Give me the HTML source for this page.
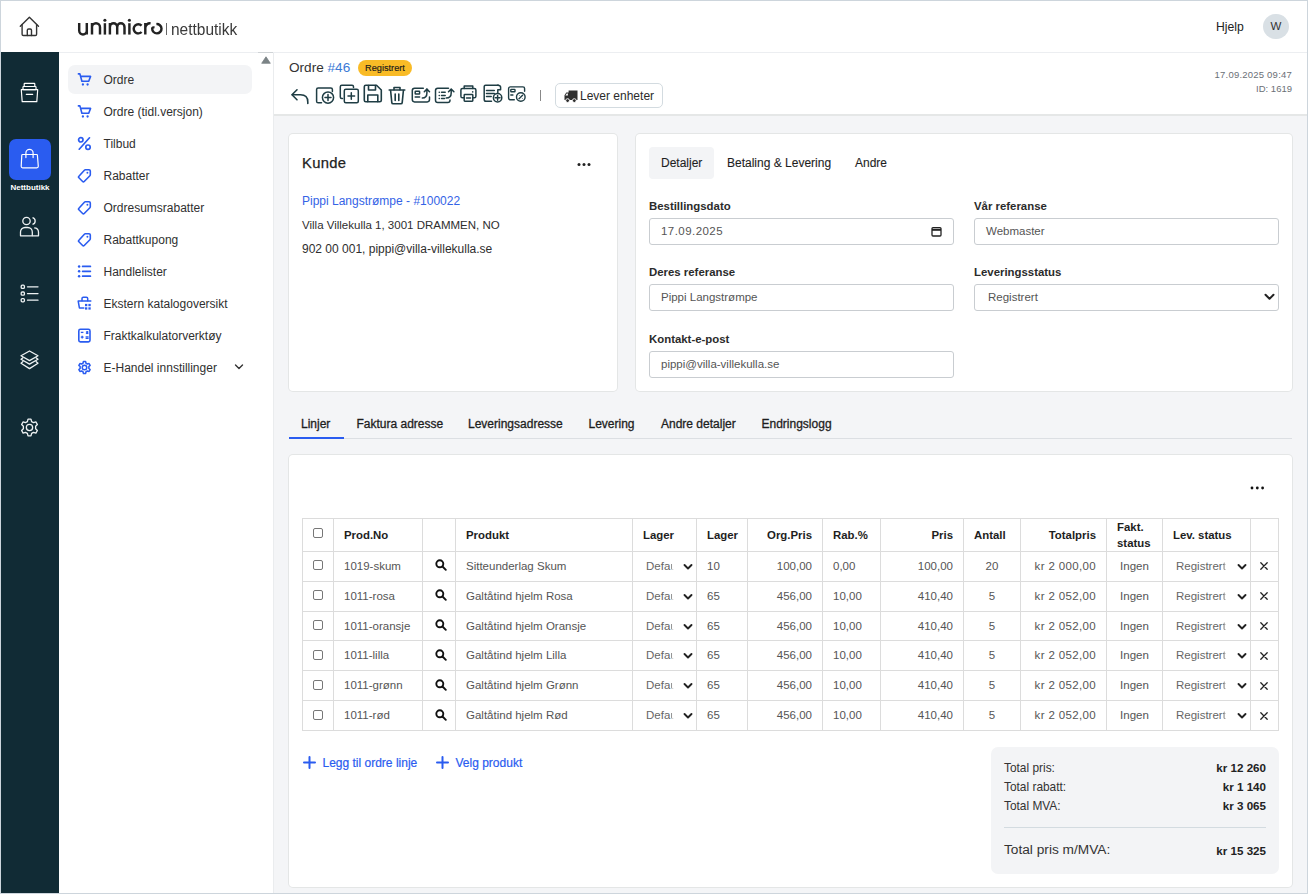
<!DOCTYPE html>
<html><head><meta charset="utf-8">
<style>
*{box-sizing:border-box;margin:0;padding:0}
html,body{width:1308px;height:894px;overflow:hidden;background:#fff}
body{font-family:"Liberation Sans",sans-serif;color:#2b2b2b;font-size:12px;position:relative}
.a{position:absolute}
.frame{position:absolute;left:0;top:0;width:1308px;height:894px;border:1px solid #cdd5dc;pointer-events:none;z-index:50}
.hdr{left:0;top:0;width:1308px;height:53px;background:#fff;border-bottom:1px solid #eceef1}
.side{left:1px;top:52px;width:58px;height:842px;background:#112b35}
.menu{left:59px;top:53px;width:215px;height:841px;background:#fff;border-right:1px solid #eaecee}
.content{left:274px;top:53px;width:1034px;height:841px;background:#f4f5f7}
.tb{left:274px;top:53px;width:1034px;height:63px;background:#fff;border-bottom:2px solid #e5e7e7}
.mi{position:absolute;left:68px;width:184px;height:29px;border-radius:7px}
.mi .t{position:absolute;left:35.5px;top:7.5px;font-size:12px;color:#303030;white-space:nowrap;line-height:14px}
.mi svg{position:absolute;left:9px;top:7px}
.card{background:#fff;border-radius:4px;box-shadow:0 0 0 1px #e4e6e6}
.lbl{position:absolute;font-weight:700;font-size:11.4px;color:#2b2b2b;white-space:nowrap}
.inp{position:absolute;height:27px;border:1px solid #c9cdd1;border-radius:3px;background:#fff;font-size:11.5px;color:#555;padding-left:11px;line-height:25px;white-space:nowrap}
.tab{position:absolute;font-size:12px;color:#1e1e1e;white-space:nowrap;line-height:14px;-webkit-text-stroke:0.3px #1e1e1e}
table.lines{position:absolute;left:302px;top:518px;border-collapse:collapse;table-layout:fixed;width:977px}
table.lines td,table.lines th{border:1px solid #dcdcdc;padding:0 10px;font-size:11.5px;white-space:nowrap;overflow:hidden}
table.lines th{font-weight:700;color:#1e1e1e;text-align:left;height:33px;font-size:11.4px;line-height:16px}
table.lines td{height:29.83px;color:#555;padding-bottom:1px}
.cbr{position:relative;top:-2px}
.cbh{position:relative;top:-3px}
.num{letter-spacing:0.25px}
.r{text-align:right!important}
.c{text-align:center!important}
.cb{display:inline-block;width:10px;height:10px;border:1px solid #777;border-radius:2px;background:#fff;vertical-align:middle}
.sel{position:relative;display:block}
.chev{position:absolute;right:-7px;top:50%;margin-top:-3px}
.sel{padding-left:3px;color:#666}
.fd{display:inline-block;overflow:hidden;vertical-align:bottom;-webkit-mask-image:linear-gradient(90deg,#000 10%,transparent 100%)}
.tot{position:absolute;font-size:11.9px;color:#333;white-space:nowrap}
.totb{position:absolute;font-size:11.6px;font-weight:700;color:#222;white-space:nowrap;text-align:right}
</style></head><body>
<div class="frame"></div>

<!-- header -->
<div class="a hdr"></div>
<svg class="a" style="left:19px;top:16px" width="22" height="22" viewBox="0 0 22 22" fill="none" stroke="#333" stroke-width="1.4" stroke-linejoin="round" stroke-linecap="round">
<path d="M1.3 10.2 L10.4 1.3 L19.5 10.2"/><path d="M3.1 8.5 V18.2 Q3.1 19.5 4.4 19.5 H16.3 Q17.6 19.5 17.6 18.2 V8.5"/><path d="M8.3 19.5 V14.3 Q8.3 13 9.6 13 H11.2 Q12.5 13 12.5 14.3 V19.5"/></svg>
<svg class="a" style="left:0;top:0" width="170" height="45" viewBox="0 0 170 45" fill="none" stroke="#232323" stroke-width="2.45">
<path d="M79.2 23 V30.6 A3.8 3.8 0 0 0 86.8 30.6 V23 M86.8 29 V34.6"/>
<path d="M92 34.6 V23 M92 27.2 A4 4 0 0 1 100 27.2 V34.6"/>
<path d="M104.9 23.2 V34.6"/><circle cx="104.9" cy="20.2" r="1.55" fill="#232323" stroke="none"/>
<path d="M109.9 34.6 V23 M109.9 26.9 A3.65 3.65 0 0 1 117.2 26.9 V34.6 M117.2 26.9 A3.65 3.65 0 0 1 124.5 26.9 V34.6"/>
<path d="M129.4 23.2 V34.6"/><circle cx="129.4" cy="20.2" r="1.55" fill="#232323" stroke="none"/>
<path d="M141.6 25.6 A4.6 4.6 0 1 0 141.6 32"/>
<path d="M145.3 34.6 V23 M145.3 28 A4.6 4.6 0 0 1 150.6 23.4"/>
<path d="M156.4 24.1 A4.65 4.65 0 1 1 152.2 28.6 Q152.3 26.9 154.5 27.6"/>
</svg>
<div class="a" style="left:166px;top:23px;width:1px;height:12px;background:#666"></div>
<div class="a" style="left:170.5px;top:19px;font-size:17.2px;color:#3a3a3a;line-height:20px;transform:scaleX(0.9);transform-origin:0 0;white-space:nowrap">nettbutikk</div>
<div class="a" style="left:1216px;top:20px;font-size:12.2px;color:#222;line-height:14px">Hjelp</div>
<div class="a" style="left:1263px;top:14px;width:26px;height:25px;border-radius:13px;background:#d9e0e5;color:#333;font-size:11.5px;text-align:center;line-height:25px">W</div>

<!-- dark sidebar -->
<div class="a side"></div>

<svg class="a" style="left:20px;top:82px" width="19" height="21" viewBox="0 0 19 21" fill="none" stroke="#fff" stroke-width="1.2" stroke-linejoin="round">
<rect x="4.2" y="1.3" width="10.6" height="3.2" rx="0.6"/><rect x="3" y="4.5" width="13" height="3.2" rx="0.6"/>
<path d="M1.3 7.7 H17.7 L16.8 19.7 H2.2 Z"/><path d="M6.3 12.3 H12.7" stroke-linecap="round"/>
</svg>
<div class="a" style="left:9px;top:139px;width:42px;height:41px;border-radius:7px;background:#2a5cf0"></div>
<svg class="a" style="left:20px;top:148px" width="20" height="21" viewBox="0 0 20 21" fill="none" stroke="#fff" stroke-width="1.2" stroke-linejoin="round" stroke-linecap="round">
<path d="M2.6 6.5 H16.6 Q17.3 6.5 17.4 7.2 L18.3 18.3 Q18.3 19.8 16.8 19.8 H2.6 Q1.2 19.8 1.2 18.3 L1.8 7.2 Q1.9 6.5 2.6 6.5 Z"/>
<path d="M5.9 9.6 V5 A3.6 3.6 0 0 1 13.1 5 V9.6"/>
</svg>
<div class="a" style="left:0;top:182px;width:60px;text-align:center;font-size:8px;font-weight:700;color:#fff;line-height:11px">Nettbutikk</div>
<svg class="a" style="left:19px;top:216px" width="21" height="21" viewBox="0 0 21 21" fill="none" stroke="#eef2f3" stroke-width="1.3" stroke-linejoin="round">
<circle cx="7.5" cy="5" r="3.7"/><path d="M13.5 1.6 A3.5 3.5 0 0 1 13.5 8.4"/>
<path d="M1.5 19.8 V16 A4.5 4.5 0 0 1 6 11.5 H8.8 A4.5 4.5 0 0 1 13.3 16 V19.8 Z"/><path d="M15.2 11.8 A4.5 4.5 0 0 1 19.5 16 V19.8 H13.3"/>
</svg>
<svg class="a" style="left:19px;top:283px" width="21" height="21" viewBox="0 0 21 21" fill="none" stroke="#eef2f3" stroke-width="1.3" stroke-linejoin="round" stroke-linecap="round">
<rect x="2.2" y="2.2" width="3.2" height="3.2" rx="1"/><rect x="2.2" y="9" width="3.2" height="3.2" rx="1"/><rect x="2.2" y="15.6" width="3.2" height="3.2" rx="1"/>
<path d="M8.5 3.8 H19"/><path d="M8.5 10.6 H19"/><path d="M8.5 17.2 H19"/>
</svg>
<svg class="a" style="left:19px;top:350px" width="21" height="21" viewBox="0 0 21 21" fill="none" stroke="#eef2f3" stroke-width="1.3" stroke-linejoin="round">
<path d="M10.5 1 L19 5.8 L10.5 10.6 L2 5.8 Z"/><path d="M4.3 7.6 L2 9.3 L10.5 14.1 L19 9.3 L16.7 7.6"/><path d="M4.3 11.3 L2 13.2 L10.5 18.6 L19 13.2 L16.7 11.3"/>
</svg>
<svg class="a" style="left:19px;top:417px" width="21" height="21" viewBox="0 0 24 24" fill="none" stroke="#eef2f3" stroke-width="1.5" stroke-linejoin="round">
<path d="M10.3 2.5 L13.7 2.5 L14.4 5.2 L16.6 6.4 L19.3 5.6 L21 8.6 L19 10.5 V13.5 L21 15.4 L19.3 18.4 L16.6 17.6 L14.4 18.8 L13.7 21.5 H10.3 L9.6 18.8 L7.4 17.6 L4.7 18.4 L3 15.4 L5 13.5 V10.5 L3 8.6 L4.7 5.6 L7.4 6.4 L9.6 5.2 Z"/>
<circle cx="12" cy="12" r="3.6"/>
</svg>


<!-- menu -->
<div class="a menu"></div>
<div class="a" style="left:258px;top:52px;width:15px;height:1px;background:#cfd3d6"></div>
<svg class="a" style="left:261px;top:56px" width="10" height="8" viewBox="0 0 10 8"><path d="M5 0.8 L9.3 7.3 H0.7 Z" fill="#7b8386" stroke="#7b8386" stroke-width="0.8" stroke-linejoin="round"/></svg>
<div class="mi" style="top:65px;background:#f3f4f6;"><svg width="15" height="15" viewBox="0 0 15 15" fill="none" stroke="#2a5cf0" stroke-width="1.6" stroke-linejoin="round" stroke-linecap="round"><path d="M1.4 1.9 H2.9 L4.9 9.2 H11.7 L13.6 4.4 H3.7"/><circle cx="5.9" cy="12.5" r="1.15" fill="#2a5cf0" stroke="none"/><circle cx="10.6" cy="12.5" r="1.15" fill="#2a5cf0" stroke="none"/></svg><div class="t">Ordre</div></div>
<div class="mi" style="top:97px;"><svg width="15" height="15" viewBox="0 0 15 15" fill="none" stroke="#2a5cf0" stroke-width="1.6" stroke-linejoin="round" stroke-linecap="round"><path d="M1.4 1.9 H2.9 L4.9 9.2 H11.7 L13.6 4.4 H3.7"/><circle cx="5.9" cy="12.5" r="1.15" fill="#2a5cf0" stroke="none"/><circle cx="10.6" cy="12.5" r="1.15" fill="#2a5cf0" stroke="none"/></svg><div class="t">Ordre (tidl.versjon)</div></div>
<div class="mi" style="top:129px;"><svg width="15" height="15" viewBox="0 0 15 15" fill="none" stroke="#2a5cf0" stroke-width="1.7" stroke-linecap="round"><path d="M12.5 1.8 L2.2 13.2"/><circle cx="3.8" cy="3.8" r="2.2"/><circle cx="11" cy="11.2" r="2.2"/></svg><div class="t">Tilbud</div></div>
<div class="mi" style="top:161px;"><svg width="15" height="15" viewBox="0 0 15 15" fill="none" stroke="#2a5cf0" stroke-width="1.6" stroke-linejoin="round"><path d="M8.3 1.8 H12 Q13.3 1.8 13.3 3.1 V6.8 Q13.3 7.4 12.9 7.8 L7.2 13.5 Q6.4 14.3 5.6 13.5 L1.9 9.8 Q1.1 9 1.9 8.2 L7.4 2.2 Q7.8 1.8 8.3 1.8 Z"/><circle cx="10.4" cy="4.7" r="0.95" fill="#2a5cf0" stroke="none"/></svg><div class="t">Rabatter</div></div>
<div class="mi" style="top:193px;"><svg width="15" height="15" viewBox="0 0 15 15" fill="none" stroke="#2a5cf0" stroke-width="1.6" stroke-linejoin="round"><path d="M8.3 1.8 H12 Q13.3 1.8 13.3 3.1 V6.8 Q13.3 7.4 12.9 7.8 L7.2 13.5 Q6.4 14.3 5.6 13.5 L1.9 9.8 Q1.1 9 1.9 8.2 L7.4 2.2 Q7.8 1.8 8.3 1.8 Z"/><circle cx="10.4" cy="4.7" r="0.95" fill="#2a5cf0" stroke="none"/></svg><div class="t">Ordresumsrabatter</div></div>
<div class="mi" style="top:225px;"><svg width="15" height="15" viewBox="0 0 15 15" fill="none" stroke="#2a5cf0" stroke-width="1.6" stroke-linejoin="round"><path d="M8.3 1.8 H12 Q13.3 1.8 13.3 3.1 V6.8 Q13.3 7.4 12.9 7.8 L7.2 13.5 Q6.4 14.3 5.6 13.5 L1.9 9.8 Q1.1 9 1.9 8.2 L7.4 2.2 Q7.8 1.8 8.3 1.8 Z"/><circle cx="10.4" cy="4.7" r="0.95" fill="#2a5cf0" stroke="none"/></svg><div class="t">Rabattkupong</div></div>
<div class="mi" style="top:257px;"><svg width="15" height="15" viewBox="0 0 15 15" fill="none" stroke="#2a5cf0" stroke-width="1.7" stroke-linecap="round"><circle cx="2.1" cy="2.4" r="1.25" fill="#2a5cf0" stroke="none"/><circle cx="2.1" cy="7.3" r="1.25" fill="#2a5cf0" stroke="none"/><circle cx="2.1" cy="12.2" r="1.25" fill="#2a5cf0" stroke="none"/><path d="M5.6 2.4 H13.4 M5.6 7.3 H13.4 M5.6 12.2 H13.4"/></svg><div class="t">Handlelister</div></div>
<div class="mi" style="top:289px;"><svg width="15" height="15" viewBox="0 0 15 15" fill="none" stroke="#2a5cf0" stroke-width="1.5" stroke-linejoin="round" stroke-linecap="round"><path d="M5 4.8 V2.6 Q5 1.3 6.3 1.3 H9.4 Q10.7 1.3 10.7 2.6 V4.8"/><path d="M13.8 5 H1.2 L2.4 11.9 H6.8"/><rect x="8" y="7.9" width="2.3" height="2.3" fill="#2a5cf0" stroke="none"/><rect x="11.4" y="7.9" width="2.3" height="2.3" fill="#2a5cf0" stroke="none"/><rect x="8" y="11.3" width="2.3" height="2.3" fill="#2a5cf0" stroke="none"/><rect x="11.4" y="11.3" width="2.3" height="2.3" fill="#2a5cf0" stroke="none"/></svg><div class="t">Ekstern katalogoversikt</div></div>
<div class="mi" style="top:321px;"><svg width="15" height="15" viewBox="0 0 15 15" fill="none" stroke="#2a5cf0" stroke-width="1.6"><rect x="1.8" y="1.3" width="11.2" height="12.6" rx="1.6"/><path d="M3.8 4.4 H6.4" stroke-width="1.3"/><path d="M9.2 3.6 L11.2 5.8 M11.2 3.6 L9.2 5.8" stroke-width="1.5"/><path d="M3.8 9.1 H6.6 M5.2 7.7 V10.5" stroke-width="1.3"/><path d="M8.6 8.8 H11.6 M8.6 10.4 H11.6" stroke-width="1.2"/></svg><div class="t">Fraktkalkulatorverktøy</div></div>
<div class="mi" style="top:353px;"><svg width="15" height="15" viewBox="0 0 24 24" fill="none" stroke="#2a5cf0" stroke-width="2.4" stroke-linejoin="round"><path d="M10.3 2.5 L13.7 2.5 L14.4 5.2 L16.6 6.4 L19.3 5.6 L21 8.6 L19 10.5 V13.5 L21 15.4 L19.3 18.4 L16.6 17.6 L14.4 18.8 L13.7 21.5 H10.3 L9.6 18.8 L7.4 17.6 L4.7 18.4 L3 15.4 L5 13.5 V10.5 L3 8.6 L4.7 5.6 L7.4 6.4 L9.6 5.2 Z"/><circle cx="12" cy="12" r="3.6"/></svg><div class="t">E-Handel innstillinger</div></div>
<svg class="a" style="left:234px;top:363px" width="10" height="8" viewBox="0 0 10 8" fill="none" stroke="#333" stroke-width="1.4" stroke-linecap="round" stroke-linejoin="round"><path d="M1.5 2 L5 5.5 L8.5 2"/></svg>

<!-- content -->
<div class="a content"></div>
<div class="a tb"></div>

<div class="a" style="left:289px;top:59.5px;font-size:13.6px;color:#333;line-height:16px;white-space:nowrap">Ordre <span style="color:#3b7ad6">#46</span></div>
<div class="a" style="left:358px;top:60px;width:54px;height:16px;border-radius:8px;background:#f9bb26;font-size:9.2px;color:#1a1a1a;text-align:center;line-height:16px;-webkit-text-stroke:0.15px #1a1a1a">Registrert</div>
<svg class="a" style="left:290px;top:88px" width="20" height="17" viewBox="0 0 20 17" fill="none" stroke="#1f3d44" stroke-width="1.6" stroke-linejoin="round" stroke-linecap="round"><path d="M7 1.8 L2 6.8 L7 11.8"/><path d="M2.3 6.8 H10.5 Q17.8 6.8 17.8 14 V15.5"/></svg><svg class="a" style="left:315px;top:86px" width="21" height="19" viewBox="0 0 21 19" fill="none" stroke="#1f3d44" stroke-width="1.5" stroke-linejoin="round" stroke-linecap="round"><path d="M6.5 16.8 H3.2 Q1.6 16.8 1.6 15.2 V3.6 Q1.6 2 3.2 2 H15.8 Q17.4 2 17.4 3.6 V5.5"/><circle cx="13" cy="11.6" r="5.6" fill="#fff"/><path d="M13 8.6 V14.6 M10 11.6 H16"/></svg><svg class="a" style="left:339px;top:84px" width="21" height="20" viewBox="0 0 21 20" fill="none" stroke="#1f3d44" stroke-width="1.5" stroke-linejoin="round" stroke-linecap="round"><path d="M3.5 14.5 H2.8 Q1.3 14.5 1.3 13 V2.8 Q1.3 1.3 2.8 1.3 H13 Q14.5 1.3 14.5 2.8 V3.5"/><rect x="5.3" y="5.3" width="14" height="13.5" rx="1.5" fill="#fff"/><path d="M12.3 8.8 V15.3 M9 12 H15.6"/></svg><svg class="a" style="left:363px;top:84px" width="20" height="19" viewBox="0 0 20 19" fill="none" stroke="#1f3d44" stroke-width="1.6" stroke-linejoin="round" stroke-linecap="round"><path d="M2.8 1.3 H13.5 L18.3 6 V16.3 Q18.3 17.8 16.8 17.8 H2.8 Q1.3 17.8 1.3 16.3 V2.8 Q1.3 1.3 2.8 1.3 Z"/><path d="M5.5 1.5 V6 H12.5 V1.5"/><path d="M4.8 17.6 V11 H14.8 V17.6"/></svg><svg class="a" style="left:388px;top:86px" width="18" height="19" viewBox="0 0 18 19" fill="none" stroke="#1f3d44" stroke-width="1.6" stroke-linejoin="round" stroke-linecap="round"><path d="M1.2 4 H16.8"/><path d="M6 3.8 V1.5 H12 V3.8"/><path d="M2.6 4.5 L3.8 16.6 Q3.9 17.8 5.1 17.8 H12.9 Q14.1 17.8 14.2 16.6 L15.4 4.5"/><path d="M7.2 8 V14.5 M10.8 8 V14.5"/></svg><svg class="a" style="left:411px;top:87px" width="21" height="17" viewBox="0 0 21 17" fill="none" stroke="#1f3d44" stroke-width="1.5" stroke-linejoin="round" stroke-linecap="round"><path d="M12.3 1.3 H3.6 Q1.3 1.3 1.3 3.6 V12.6 Q1.3 14.9 3.6 14.9 H16.2 Q18.5 14.9 18.5 12.6 V10"/><rect x="4.2" y="4.3" width="4.4" height="2.6" rx="0.5"/><path d="M4.2 10.1 H8.6"/><path d="M11.3 11 Q15.9 11 15.9 6 V2.3"/><path d="M13.3 4.7 L15.9 2.1 L18.5 4.7"/></svg><svg class="a" style="left:434px;top:87px" width="22" height="17" viewBox="0 0 22 17" fill="none" stroke="#1f3d44" stroke-width="1.5" stroke-linejoin="round" stroke-linecap="round"><path d="M14.5 1.3 H3.8 Q1.5 1.3 1.5 3.6 V13.3 Q1.5 15.6 3.8 15.6 H13.7 Q16 15.6 16 13.3 V13"/><path d="M5.2 5.3 H5.3 M5.2 8.4 H5.3 M5.2 11.4 H5.3 M7.5 5.3 H11.2 M7.5 8.4 H11.2 M7.5 11.4 H10.5"/><path d="M12.2 11 Q17.2 11 17.2 6 V2.4"/><path d="M14.5 4.8 L17.2 2.1 L19.9 4.8"/></svg><svg class="a" style="left:459px;top:84px" width="19" height="19" viewBox="0 0 19 19" fill="none" stroke="#1f3d44" stroke-width="1.5" stroke-linejoin="round" stroke-linecap="round"><path d="M5.2 4.4 V2.1 H13.8 V4.4"/><path d="M5.2 13.8 H3.5 Q1.9 13.8 1.9 12.2 V6 Q1.9 4.4 3.5 4.4 H15.3 Q16.9 4.4 16.9 6 V12.2 Q16.9 13.8 15.3 13.8 H13.8"/><rect x="5.2" y="10.6" width="8.6" height="6.6" rx="0.6"/><path d="M7.5 14 H11.5"/><circle cx="13.7" cy="7.9" r="0.8" fill="#1f3d44" stroke="none"/></svg><svg class="a" style="left:482px;top:83px" width="21" height="21" viewBox="0 0 21 21" fill="none" stroke="#1f3d44" stroke-width="1.5" stroke-linejoin="round" stroke-linecap="round"><path d="M9.5 18.2 H4 Q2.2 18.2 2.2 16.4 V3.6 Q2.2 2.2 3.6 2.2 H16.5"/><path d="M15.5 2.2 Q18.6 2.2 18.6 4.2 V6.7 H15.8 V9.5"/><path d="M4.5 7.4 H12.3 M4.5 10.5 H12.3 M4.5 13.6 H9.2"/><circle cx="15.6" cy="14.8" r="4.2" fill="#fff"/><path d="M15.6 12.4 V17.2 M13.2 14.8 H18"/></svg><svg class="a" style="left:507px;top:85px" width="21" height="19" viewBox="0 0 21 19" fill="none" stroke="#1f3d44" stroke-width="1.4" stroke-linejoin="round" stroke-linecap="round"><path d="M7.3 14.8 H3.3 Q1.6 14.8 1.6 13.1 V3.6 Q1.6 1.9 3.3 1.9 H15.9 Q17.6 1.9 17.6 3.6 V6.3"/><rect x="3.8" y="4.4" width="4.2" height="2.4" rx="0.5"/><path d="M3.8 10 H5.9"/><circle cx="13.8" cy="12" r="4.3" fill="#fff"/><path d="M12 13.8 L15.6 10.2"/><circle cx="12.3" cy="10.5" r="0.45" fill="#1f3d44" stroke="none"/><circle cx="15.3" cy="13.5" r="0.45" fill="#1f3d44" stroke="none"/></svg>
<div class="a" style="left:540px;top:90px;width:1.3px;height:11px;background:#888"></div>
<div class="a" style="left:555px;top:83px;width:108px;height:25px;border:1px solid #d3dbe0;border-radius:5px;background:#fff"></div>
<svg class="a" style="left:564px;top:90px" width="14" height="13" viewBox="0 0 14 13"><path d="M4.6 0.5 H13.5 V10 H0.5 V5.3 L2.3 2.6 H4.6 Z" fill="#2e2e2e"/><path d="M1.4 5.4 L2.7 3.6 H3.9 V5.4 Z" fill="#fff"/><circle cx="3.6" cy="10.6" r="1.9" fill="#2e2e2e" stroke="#fff" stroke-width="0.9"/><circle cx="10.3" cy="10.6" r="1.9" fill="#2e2e2e" stroke="#fff" stroke-width="0.9"/></svg>
<div class="a" style="left:580px;top:88.5px;font-size:12px;color:#2b2b2b;line-height:14px;white-space:nowrap">Lever enheter</div>
<div class="a" style="left:1190px;top:69px;width:102px;text-align:right;font-size:9.5px;letter-spacing:0.22px;color:#6b6f76;line-height:12px;white-space:nowrap">17.09.2025 09:47</div>
<div class="a" style="left:1190px;top:83px;width:102px;text-align:right;font-size:9.5px;color:#6b6f76;line-height:12px;white-space:nowrap">ID: 1619</div>


<div class="a card" style="left:289px;top:134px;width:328px;height:257px"></div>
<div class="a" style="left:302px;top:154px;font-size:14.8px;font-weight:400;color:#222;line-height:18px;letter-spacing:0.3px;-webkit-text-stroke:0.25px #222">Kunde</div>
<svg class="a" style="left:577px;top:162px" width="14" height="5" viewBox="0 0 14 5"><circle cx="2" cy="2.5" r="1.5" fill="#222"/><circle cx="7" cy="2.5" r="1.5" fill="#222"/><circle cx="12" cy="2.5" r="1.5" fill="#222"/></svg>
<div class="a" style="left:302px;top:194px;font-size:12px;color:#3463e6;line-height:14px;white-space:nowrap">Pippi Langstrømpe - #100022</div>
<div class="a" style="left:302px;top:218px;font-size:11.5px;color:#2e2e2e;line-height:14px;white-space:nowrap">Villa Villekulla 1, 3001 DRAMMEN, NO</div>
<div class="a" style="left:302px;top:242px;font-size:12px;color:#2e2e2e;line-height:14px;white-space:nowrap">902 00 001, pippi@villa-villekulla.se</div>

<div class="a card" style="left:636px;top:134px;width:656px;height:257px"></div>
<div class="a" style="left:649px;top:147px;width:65px;height:32px;border-radius:4px;background:#f3f4f6"></div>
<div class="tab" style="left:661px;top:156px;-webkit-text-stroke:0.1px #222">Detaljer</div>
<div class="tab" style="left:727px;top:156px;-webkit-text-stroke:0.1px #222">Betaling &amp; Levering</div>
<div class="tab" style="left:855px;top:156px;-webkit-text-stroke:0.1px #222">Andre</div>

<div class="lbl" style="left:649px;top:200px">Bestillingsdato</div>
<div class="inp" style="left:649px;top:218px;width:305px;letter-spacing:0.45px">17.09.2025</div>
<svg class="a" style="left:931px;top:226px" width="11" height="11" viewBox="0 0 11 11" fill="none" stroke="#222" stroke-width="1.3"><rect x="1" y="1.6" width="9" height="8.4" rx="1"/><path d="M1 3.8 H10" stroke-width="2"/></svg>
<div class="lbl" style="left:974px;top:200px">Vår referanse</div>
<div class="inp" style="left:974px;top:218px;width:305px">Webmaster</div>

<div class="lbl" style="left:649px;top:266px">Deres referanse</div>
<div class="inp" style="left:649px;top:284px;width:305px">Pippi Langstrømpe</div>
<div class="lbl" style="left:974px;top:266px">Leveringsstatus</div>
<div class="inp" style="left:974px;top:284px;width:305px;padding-left:13px">Registrert</div>
<svg class="a" style="left:1264px;top:293px" width="11" height="8" viewBox="0 0 11 8" fill="none" stroke="#222" stroke-width="2" stroke-linecap="round" stroke-linejoin="round"><path d="M1.5 1.8 L5.5 5.8 L9.5 1.8"/></svg>

<div class="lbl" style="left:649px;top:333px">Kontakt-e-post</div>
<div class="inp" style="left:649px;top:351px;width:305px">pippi@villa-villekulla.se</div>


<div class="tab" style="left:301px;top:417px">Linjer</div>
<div class="tab" style="left:356.5px;top:417px">Faktura adresse</div>
<div class="tab" style="left:468px;top:417px">Leveringsadresse</div>
<div class="tab" style="left:588.5px;top:417px">Levering</div>
<div class="tab" style="left:661px;top:417px">Andre detaljer</div>
<div class="tab" style="left:761.5px;top:417px">Endringslogg</div>
<div class="a" style="left:289px;top:438px;width:1003px;height:1px;background:#dcdfe3"></div>
<div class="a" style="left:289px;top:437px;width:55px;height:2px;background:#2a5cf0"></div>

<div class="a card" style="left:289px;top:455px;width:1003px;height:432px"></div>
<svg class="a" style="left:1250px;top:486px" width="15" height="4" viewBox="0 0 15 4"><circle cx="2" cy="2" r="1.4" fill="#111"/><circle cx="7.3" cy="2" r="1.4" fill="#111"/><circle cx="12.6" cy="2" r="1.4" fill="#111"/></svg>
<table class="lines"><colgroup><col style="width:31px"><col style="width:89px"><col style="width:33px"><col style="width:177px"><col style="width:64px"><col style="width:51px"><col style="width:75px"><col style="width:58px"><col style="width:83px"><col style="width:57px"><col style="width:86px"><col style="width:56px"><col style="width:88px"><col style="width:28px"></colgroup>
<tr><th class="c" style="padding:0"><span class="cb cbh"></span></th><th>Prod.No</th><th></th><th>Produkt</th><th>Lager</th><th>Lager</th><th class="r">Org.Pris</th><th>Rab.%</th><th class="r">Pris</th><th>Antall</th><th class="r">Totalpris</th><th>Fakt.<br>status</th><th>Lev. status</th><th></th></tr>
<tr><td class="c" style="padding:0"><span class="cb cbr"></span></td><td>1019-skum</td><td class="c" style="padding:0"><svg style="position:relative;left:2px;top:0px" width="12" height="12" viewBox="0 0 12 12" fill="none" stroke="#111" stroke-width="1.9" stroke-linecap="round"><circle cx="4.8" cy="4.8" r="3.5"/><path d="M7.5 7.5 L10.8 10.8"/></svg></td><td>Sitteunderlag Skum</td><td><span class="sel">Defa<span class="fd" style="width:4px">u</span><svg class="chev" width="10" height="8" viewBox="0 0 10 8" fill="none" stroke="#222" stroke-width="1.9" stroke-linecap="round" stroke-linejoin="round"><path d="M1.5 2 L5 5.5 L8.5 2"/></svg></span></td><td>10</td><td class="r">100,00</td><td>0,00</td><td class="r">100,00</td><td class="c">20</td><td class="r" style="letter-spacing:0.35px">kr 2 000,00</td><td class="c">Ingen</td><td><span class="sel">Registrer<span class="fd" style="width:4px">t</span><svg class="chev" width="10" height="8" viewBox="0 0 10 8" fill="none" stroke="#222" stroke-width="1.9" stroke-linecap="round" stroke-linejoin="round"><path d="M1.5 2 L5 5.5 L8.5 2"/></svg></span></td><td class="c" style="padding:0"><svg style="position:relative;left:-1px;top:1px" width="10" height="10" viewBox="0 0 10 10" fill="none" stroke="#222" stroke-width="1.3" stroke-linecap="round"><path d="M1.8 1.8 L8.2 8.2 M8.2 1.8 L1.8 8.2"/></svg></td></tr><tr><td class="c" style="padding:0"><span class="cb cbr"></span></td><td>1011-rosa</td><td class="c" style="padding:0"><svg style="position:relative;left:2px;top:0px" width="12" height="12" viewBox="0 0 12 12" fill="none" stroke="#111" stroke-width="1.9" stroke-linecap="round"><circle cx="4.8" cy="4.8" r="3.5"/><path d="M7.5 7.5 L10.8 10.8"/></svg></td><td>Galtåtind hjelm Rosa</td><td><span class="sel">Defa<span class="fd" style="width:4px">u</span><svg class="chev" width="10" height="8" viewBox="0 0 10 8" fill="none" stroke="#222" stroke-width="1.9" stroke-linecap="round" stroke-linejoin="round"><path d="M1.5 2 L5 5.5 L8.5 2"/></svg></span></td><td>65</td><td class="r">456,00</td><td>10,00</td><td class="r">410,40</td><td class="c">5</td><td class="r" style="letter-spacing:0.35px">kr 2 052,00</td><td class="c">Ingen</td><td><span class="sel">Registrer<span class="fd" style="width:4px">t</span><svg class="chev" width="10" height="8" viewBox="0 0 10 8" fill="none" stroke="#222" stroke-width="1.9" stroke-linecap="round" stroke-linejoin="round"><path d="M1.5 2 L5 5.5 L8.5 2"/></svg></span></td><td class="c" style="padding:0"><svg style="position:relative;left:-1px;top:1px" width="10" height="10" viewBox="0 0 10 10" fill="none" stroke="#222" stroke-width="1.3" stroke-linecap="round"><path d="M1.8 1.8 L8.2 8.2 M8.2 1.8 L1.8 8.2"/></svg></td></tr><tr><td class="c" style="padding:0"><span class="cb cbr"></span></td><td>1011-oransje</td><td class="c" style="padding:0"><svg style="position:relative;left:2px;top:0px" width="12" height="12" viewBox="0 0 12 12" fill="none" stroke="#111" stroke-width="1.9" stroke-linecap="round"><circle cx="4.8" cy="4.8" r="3.5"/><path d="M7.5 7.5 L10.8 10.8"/></svg></td><td>Galtåtind hjelm Oransje</td><td><span class="sel">Defa<span class="fd" style="width:4px">u</span><svg class="chev" width="10" height="8" viewBox="0 0 10 8" fill="none" stroke="#222" stroke-width="1.9" stroke-linecap="round" stroke-linejoin="round"><path d="M1.5 2 L5 5.5 L8.5 2"/></svg></span></td><td>65</td><td class="r">456,00</td><td>10,00</td><td class="r">410,40</td><td class="c">5</td><td class="r" style="letter-spacing:0.35px">kr 2 052,00</td><td class="c">Ingen</td><td><span class="sel">Registrer<span class="fd" style="width:4px">t</span><svg class="chev" width="10" height="8" viewBox="0 0 10 8" fill="none" stroke="#222" stroke-width="1.9" stroke-linecap="round" stroke-linejoin="round"><path d="M1.5 2 L5 5.5 L8.5 2"/></svg></span></td><td class="c" style="padding:0"><svg style="position:relative;left:-1px;top:1px" width="10" height="10" viewBox="0 0 10 10" fill="none" stroke="#222" stroke-width="1.3" stroke-linecap="round"><path d="M1.8 1.8 L8.2 8.2 M8.2 1.8 L1.8 8.2"/></svg></td></tr><tr><td class="c" style="padding:0"><span class="cb cbr"></span></td><td>1011-lilla</td><td class="c" style="padding:0"><svg style="position:relative;left:2px;top:0px" width="12" height="12" viewBox="0 0 12 12" fill="none" stroke="#111" stroke-width="1.9" stroke-linecap="round"><circle cx="4.8" cy="4.8" r="3.5"/><path d="M7.5 7.5 L10.8 10.8"/></svg></td><td>Galtåtind hjelm Lilla</td><td><span class="sel">Defa<span class="fd" style="width:4px">u</span><svg class="chev" width="10" height="8" viewBox="0 0 10 8" fill="none" stroke="#222" stroke-width="1.9" stroke-linecap="round" stroke-linejoin="round"><path d="M1.5 2 L5 5.5 L8.5 2"/></svg></span></td><td>65</td><td class="r">456,00</td><td>10,00</td><td class="r">410,40</td><td class="c">5</td><td class="r" style="letter-spacing:0.35px">kr 2 052,00</td><td class="c">Ingen</td><td><span class="sel">Registrer<span class="fd" style="width:4px">t</span><svg class="chev" width="10" height="8" viewBox="0 0 10 8" fill="none" stroke="#222" stroke-width="1.9" stroke-linecap="round" stroke-linejoin="round"><path d="M1.5 2 L5 5.5 L8.5 2"/></svg></span></td><td class="c" style="padding:0"><svg style="position:relative;left:-1px;top:1px" width="10" height="10" viewBox="0 0 10 10" fill="none" stroke="#222" stroke-width="1.3" stroke-linecap="round"><path d="M1.8 1.8 L8.2 8.2 M8.2 1.8 L1.8 8.2"/></svg></td></tr><tr><td class="c" style="padding:0"><span class="cb cbr"></span></td><td>1011-grønn</td><td class="c" style="padding:0"><svg style="position:relative;left:2px;top:0px" width="12" height="12" viewBox="0 0 12 12" fill="none" stroke="#111" stroke-width="1.9" stroke-linecap="round"><circle cx="4.8" cy="4.8" r="3.5"/><path d="M7.5 7.5 L10.8 10.8"/></svg></td><td>Galtåtind hjelm Grønn</td><td><span class="sel">Defa<span class="fd" style="width:4px">u</span><svg class="chev" width="10" height="8" viewBox="0 0 10 8" fill="none" stroke="#222" stroke-width="1.9" stroke-linecap="round" stroke-linejoin="round"><path d="M1.5 2 L5 5.5 L8.5 2"/></svg></span></td><td>65</td><td class="r">456,00</td><td>10,00</td><td class="r">410,40</td><td class="c">5</td><td class="r" style="letter-spacing:0.35px">kr 2 052,00</td><td class="c">Ingen</td><td><span class="sel">Registrer<span class="fd" style="width:4px">t</span><svg class="chev" width="10" height="8" viewBox="0 0 10 8" fill="none" stroke="#222" stroke-width="1.9" stroke-linecap="round" stroke-linejoin="round"><path d="M1.5 2 L5 5.5 L8.5 2"/></svg></span></td><td class="c" style="padding:0"><svg style="position:relative;left:-1px;top:1px" width="10" height="10" viewBox="0 0 10 10" fill="none" stroke="#222" stroke-width="1.3" stroke-linecap="round"><path d="M1.8 1.8 L8.2 8.2 M8.2 1.8 L1.8 8.2"/></svg></td></tr><tr><td class="c" style="padding:0"><span class="cb cbr"></span></td><td>1011-rød</td><td class="c" style="padding:0"><svg style="position:relative;left:2px;top:0px" width="12" height="12" viewBox="0 0 12 12" fill="none" stroke="#111" stroke-width="1.9" stroke-linecap="round"><circle cx="4.8" cy="4.8" r="3.5"/><path d="M7.5 7.5 L10.8 10.8"/></svg></td><td>Galtåtind hjelm Rød</td><td><span class="sel">Defa<span class="fd" style="width:4px">u</span><svg class="chev" width="10" height="8" viewBox="0 0 10 8" fill="none" stroke="#222" stroke-width="1.9" stroke-linecap="round" stroke-linejoin="round"><path d="M1.5 2 L5 5.5 L8.5 2"/></svg></span></td><td>65</td><td class="r">456,00</td><td>10,00</td><td class="r">410,40</td><td class="c">5</td><td class="r" style="letter-spacing:0.35px">kr 2 052,00</td><td class="c">Ingen</td><td><span class="sel">Registrer<span class="fd" style="width:4px">t</span><svg class="chev" width="10" height="8" viewBox="0 0 10 8" fill="none" stroke="#222" stroke-width="1.9" stroke-linecap="round" stroke-linejoin="round"><path d="M1.5 2 L5 5.5 L8.5 2"/></svg></span></td><td class="c" style="padding:0"><svg style="position:relative;left:-1px;top:1px" width="10" height="10" viewBox="0 0 10 10" fill="none" stroke="#222" stroke-width="1.3" stroke-linecap="round"><path d="M1.8 1.8 L8.2 8.2 M8.2 1.8 L1.8 8.2"/></svg></td></tr></table>
<div class="a" style="left:303px;top:756px"><svg width="13" height="13" viewBox="0 0 13 13" fill="none" stroke="#2a5cf0" stroke-width="2" stroke-linecap="round"><path d="M6.5 1 V12 M1 6.5 H12"/></svg></div>
<div class="a" style="left:322.5px;top:755.5px;font-size:12px;color:#2a5cf0;line-height:14px;white-space:nowrap;-webkit-text-stroke:0.2px #2a5cf0">Legg til ordre linje</div>
<div class="a" style="left:436px;top:756px"><svg width="13" height="13" viewBox="0 0 13 13" fill="none" stroke="#2a5cf0" stroke-width="2" stroke-linecap="round"><path d="M6.5 1 V12 M1 6.5 H12"/></svg></div>
<div class="a" style="left:455.5px;top:755.5px;font-size:12px;color:#2a5cf0;line-height:14px;white-space:nowrap;-webkit-text-stroke:0.2px #2a5cf0">Velg produkt</div>

<div class="a" style="left:991px;top:747px;width:288px;height:127px;border-radius:7px;background:#f3f4f6"></div>
<div class="tot" style="left:1004px;top:760.5px">Total pris:</div>
<div class="totb" style="left:1100px;width:166px;top:760.5px">kr 12 260</div>
<div class="tot" style="left:1004px;top:779.5px">Total rabatt:</div>
<div class="totb" style="left:1100px;width:166px;top:779.5px">kr 1 140</div>
<div class="tot" style="left:1004px;top:798.5px">Total MVA:</div>
<div class="totb" style="left:1100px;width:166px;top:798.5px">kr 3 065</div>
<div class="a" style="left:1004px;top:827px;width:262px;height:1px;background:#d3dbe0"></div>
<div class="tot" style="left:1004px;top:842px;font-size:13.7px">Total pris m/MVA:</div>
<div class="totb" style="left:1100px;width:166px;top:843.5px">kr 15 325</div>

</body></html>
